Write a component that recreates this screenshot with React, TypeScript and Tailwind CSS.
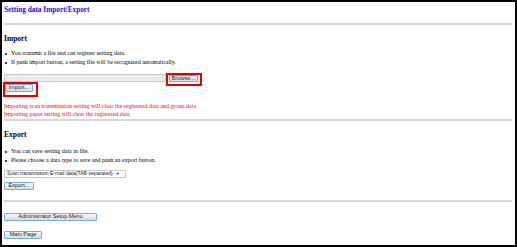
const serif = "font-['Liberation_Serif',serif]";
const sans = "font-['Liberation_Sans',Arial,sans-serif]";

const btnBase = `${sans} flex items-center justify-center whitespace-nowrap text-[5.6px] leading-none text-[#1a1a1a] bg-linear-to-b from-[#f7f7f7] to-[#dcdcdc] rounded-[1px]`;

function Btn({ label, w, h = 8, gray = false }: { label: string; w: number; h?: number; gray?: boolean }) {
  return (
    <div
      className={`${btnBase} border ${gray ? 'border-[#9a9a9a]' : 'border-[#72aee6]'}`}
      style={{ width: w, height: h }}
    >
      {label}
    </div>
  );
}

function Bullets({ items }: { items: string[] }) {
  return (
    <div className="flex flex-col">
      {items.map((t) => (
        <div key={t} className="flex items-center h-[9px] text-[6px] leading-[9px]">
          <span className="w-[7px] flex items-center">
            <span className="ml-[1px] w-[2px] h-[2px] rounded-full bg-black" />
          </span>
          <span>{t}</span>
        </div>
      ))}
    </div>
  );
}

const Rule = ({ className = '' }: { className?: string }) => (
  <div className={`h-[2px] bg-[#d6d6d6] ${className}`} />
);

export default function App() {
  return (
    <div className={`w-[517px] h-[247px] bg-white border-2 border-black overflow-hidden ${serif} text-black`}>
      <div className="pl-[2px] pr-[3px] flex flex-col">
        <div className="mt-[3px] text-[7.3px] leading-[9px] font-bold text-[#1010ff]">Setting data Import/Export</div>
        <Rule className="mt-[9px]" />

        {/* Import */}
        <div className="mt-[9px] text-[7.5px] leading-[10px] font-bold">Import</div>
        <div className="mt-[5px]">
          <Bullets
            items={[
              'You transmit a file and can register setting data.',
              'If push import button, a setting file will be recognized automatically.',
            ]}
          />
        </div>
        <div className="mt-[7px] flex items-end">
          <div className="w-[162px] h-[8px] bg-[#ebebeb] border border-[#c8c8c8]" />
          <div className="relative ml-[3px]">
            <Btn label="Browse..." w={29} h={7} gray />
            <div className="absolute -left-[3px] -right-[4px] -top-[2px] -bottom-[4px] border-2 border-[#e60000]" />
          </div>
        </div>
        <div className="mt-[2px] ml-[1px] relative w-[28px]">
          <Btn label="Import..." w={28} />
          <div className="absolute -left-[2px] -right-[5px] -top-[2px] -bottom-[5px] border-2 border-[#e60000]" />
        </div>
        <div className="mt-[10px] text-[6px] leading-[8px] text-[#ff0000]">
          <div>Importing scan transmission setting will clear the registered data and group data</div>
          <div>Importing paper setting will clear the registered data</div>
        </div>
        <Rule className="mt-[1px]" />

        {/* Export */}
        <div className="mt-[9px] text-[7.5px] leading-[10px] font-bold">Export</div>
        <div className="mt-[7px]">
          <Bullets
            items={[
              'You can save setting data in file.',
              'Please choose a data type to save and push an export button.',
            ]}
          />
        </div>
        <div
          className={`mt-[5px] w-[122px] h-[8px] border border-[#c9c9c9] bg-white flex items-center gap-[3px] whitespace-nowrap pl-[2px] ${sans} text-[5.1px] leading-none text-[#222]`}
        >
          <span>Scan transmission E-mail data(TAB separated)</span>
          <span className="text-[4px]">▼</span>
        </div>
        <div className="mt-[4px]">
          <Btn label="Export..." w={30} />
        </div>
        <Rule className="mt-[10px]" />

        <div className="mt-[11px]">
          <Btn label="Administrator Setup Menu" w={93} />
        </div>
        <div className="mt-[10px]">
          <Btn label="Main Page" w={38} />
        </div>
      </div>
    </div>
  );
}
